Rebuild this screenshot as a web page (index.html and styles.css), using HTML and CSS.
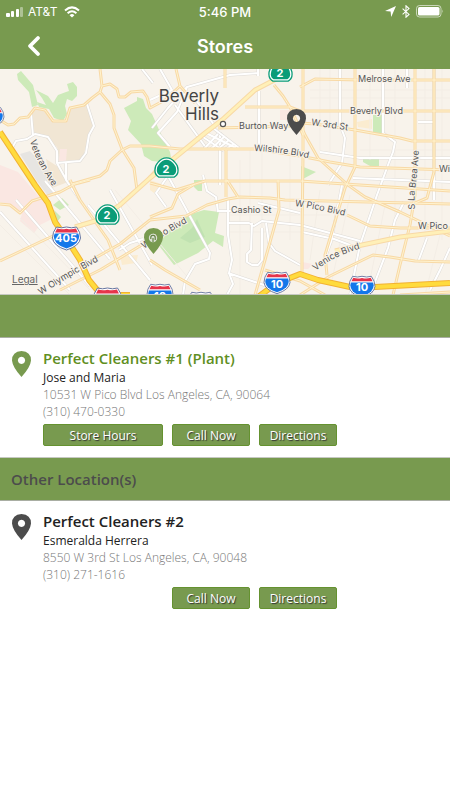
FILE: index.html
```html
<!DOCTYPE html>
<html lang="en">

<head>
    <meta charset="UTF-8">
    <meta name="viewport" content="width=device-width, initial-scale=1.0">
    <title>Stores</title>
    <link rel="stylesheet" href="styles.css">
</head>

<body>
    <header>
        <div class="status-bar">
            <div class="carrier">
                <svg width="18" height="10" viewBox="0 0 18 10" fill="#fff">
                    <rect x="0" y="6" width="4" height="4" rx="1" />
                    <rect x="5" y="4" width="3" height="6" rx="1" />
                    <rect x="10" y="2" width="3" height="8" rx="1" />
                    <rect x="14" y="0" width="3" height="10" rx="1" opacity="0.4" />
                </svg>
                <span>AT&amp;T</span>
                <svg width="16" height="12" viewBox="0 0 16 12" fill="none" stroke="#fff" stroke-width="2">
                    <path d="M1 4.5Q8 -1.8 15 4.5" />
                    <path d="M3.6 7.2Q8 3.2 12.4 7.2" />
                    <path d="M5.6 9.2Q8 7 10.4 9.2L8 11.6z" fill="#fff" stroke="none" />
                </svg>
            </div>
            <span class="clock">5:46 PM</span>
            <div class="indicators">
                <svg width="11" height="11" viewBox="0 0 11 11" fill="#fff">
                    <path d="M11 0L6.2 11L5.6 5.6L0 5z" />
                </svg>
                <svg width="8" height="13" viewBox="0 0 8 13" fill="none" stroke="#fff" stroke-width="1.1">
                    <path d="M.6 3.6L7 9.4L4 12.2V.8L7 3.6L.6 9.4" />
                </svg>
                <svg width="28" height="13" viewBox="0 0 28 13">
                    <rect x=".5" y=".5" width="24.5" height="11.5" rx="3" fill="none" stroke="#fff" opacity="0.6" />
                    <rect x="2" y="2" width="21.5" height="8.5" rx="1.6" fill="#fff" />
                    <path d="M26.4 4.4q1.4 1.8 0 3.6z" fill="#fff" opacity="0.6" />
                </svg>
            </div>
        </div>
        <div class="title-bar">
            <button class="back-btn" aria-label="Back">
                <svg width="14" height="22" viewBox="0 0 14 22" fill="none" stroke="#fff" stroke-width="3.8" stroke-linecap="round" stroke-linejoin="round">
                    <path d="M11 3L3 11L11 19" />
                </svg>
            </button>
            <h1>Stores</h1>
        </div>
    </header>

    <main>
        <svg class="map" viewBox="0 69 450 225" preserveAspectRatio="xMidYMid slice" role="img" aria-label="Map of store locations">
            <defs>
                <symbol id="state-route" viewBox="0 0 26 22" overflow="visible">
                    <path d="M5 21Q1 19 1 14Q1 9 4 6Q8 1 13 1Q18 1 22 6Q25 9 25 14Q25 19 21 21Z" fill="#0a9c78" stroke="#0a9c78" stroke-width="1.6" />
                    <path d="M5.5 19.8Q2.2 18 2.2 14Q2.2 9.5 5 6.6Q8.6 2.2 13 2.2Q17.4 2.2 21 6.6Q23.8 9.5 23.8 14Q23.8 18 20.5 19.8Z" fill="none" stroke="#fff" stroke-width="1.3" />
                </symbol>
                <symbol id="interstate" viewBox="0 0 28 24" overflow="visible">
                    <path d="M4 1Q9 2.6 14 1Q19 2.6 24 1Q28 6 28 12Q27 20 14 24Q1 20 0 12Q0 6 4 1Z" fill="#fff" stroke="#6675a0" stroke-width="1" />
                    <path d="M4.6 2.6Q9 4 14 2.8Q19 4 23.4 2.6L25.4 6.4H2.6Z" fill="#e6354b" />
                    <path d="M2.2 7.6H25.8Q28 12 24 17Q20 21 14 22.4Q8 21 4 17Q0 12 2.2 7.6Z" fill="#1477ea" />
                </symbol>
                <symbol id="pin" viewBox="0 0 19 26">
                    <path d="M9.5 0Q19 .5 19 9.5Q18.5 16 9.5 26Q.5 16 0 9.5Q0 .5 9.5 0ZM9.5 5.8a3.600 3.600 0 1 0 .01 0Z" fill="currentColor" fill-rule="evenodd" />
                </symbol>

                <g id="streets">
                    <path d="M31 113L33 136M12 148L16 141L27 139L35 134L48 137L57 151L57 163L68 183M87 104L94 126L89 135L86 153L80 161L57 163M66 163V180L80 200" />
                    <path d="M0 212L70 290M16 200L90 286M45 181L110 259M88 205L150 280M110 190L152 265M119 250L130 243L143 239M150 100L172 90L160 69M142 69L153 83" />
                    <path d="M187 87L168 108L152 128M170 147L158 133L177 112L187 87L230 75L258 73M190 92L215 126M175 105L207 149M220 132V185M258 69V76M259 91V150" />
                    <path d="M168 176L210 253L209 259L195 264L185 281L183 295M168 176L156 193L166 207M203 175L207 191L216 197L218 212M228 200V235L232 260L229 273L233 284L227 295M218 211H258M228 223H249L254 226L262 221L280 223L300 225L360 241M252 223L251 250L247 254V262L252 265H258L262 260V228M266 223L269 243L275 251L300 265M228 273L270 287" />
                    <path d="M340 69V125L345 138L342 163L328 185M383 69V133L395 142L393 152L388 165L377 195L360 245L350 295M407 69V88M434 69V200M320 152L360 158H450M353 178L450 182M418 122H434M302 232L334 239L350 245M343 180L331 242L325 258M404 202L395 220L388 248L370 295M427 238L421 254L418 262M450 248L440 270L430 290M258 203L300 213" />
                </g>
                <path id="small-streets" d="M204 132L236 148M213 128L239 148M200 135L224 151M204 149L218 134M211 149L225 136M218 149L229 140M226 149L234 144" />
                <g id="roads">
                    <path d="M0 120L8 125L14 124L20 118L28 117L35 108L45 110L53 121L66 121L70 108L84 105L92 98L100 92L102 86L110 84L117 89L119 97L125 97L131 92L143 91L147 97L150 108L165 100L180 86L176 69M100 69L102 86M100 92L110 104L114 115L114 128L122 149L134 168L137 190M195 103L180 86" />
                    <path d="M150 146L130 146L122 150L110 161L107 170L100 176L72 184M150 146L180 149H255L300 156L330 162L360 167L450 170M0 204L10 205L20 213L32 201L60 192L75 184L90 180M70 180L80 200L108 240L120 270M0 261L40 242L66 230" />
                    <path d="M60 290L100 270L150 240M95 258L120 244L150 220L186 216L207 205L228 199L240 197L270 198L285 200L450 204M130 195L147 180L165 160M150 183L176 190L205 181H300L450 191M150 260L165 270L200 290M150 217L172 208L178 194L195 184" />
                    <path d="M225 69V88M226 150V197M227 180L238 197M278 180L279 210L265 260L255 295M218 128L290 126L300 123L315 124L355 130L400 138L412 141H450M245 107H290L300 111H450M274 85L283 96L290 107L303 135M300 87L315 79L360 80H450" />
                    <path d="M303 69V155L302 240V275M355 69V167L345 188L325 255L327 275M415 69V195L410 225L400 265L393 295M434 69V172L427 198L415 203M300 123L305 135L318 158L348 185L365 197L400 212L450 236" />
                    <path d="M347 215L370 226L400 228H450M300 295L330 276L373 255L390 257L415 261L450 262M265 270L300 281L325 295M400 295L450 292" />
                </g>
                <path id="avenues" d="M75 227L95 221L120 205L150 178L205 133L222 120L255 90L280 77M335 251L362 245L400 237L450 231" />
                <path id="freeways" d="M0 132L35 185L48 203L55 222L66 238L80 260L89 280L98 291M98 295H130M258 297L277 283L300 274L318 280L350 287H375L450 283" />

                <!-- baselines for the street names -->
                <path id="veteran-line" d="M30 141Q35 160 53 187" />
                <path id="olympic-line" d="M41 295Q64 279 104 258" />
                <path id="pico-west-line" d="M144 249Q165 234 190 221" />
                <path id="wilshire-line" d="M254 151Q285 152 316 160" />
                <path id="third-line" d="M311 125L352 131" />
                <path id="pico-line" d="M295 206Q312 208 350 217" />
                <path id="venice-line" d="M316 271Q332 256 366 247" />
                <path id="brea-line" d="M415 209Q414 200 415 190Q418 172 419 145" />
            </defs>

            <rect y="69" width="450" height="226" fill="#f8f3eb" />

            <!-- parks and campus areas -->
            <g fill="#cdeab9">
                <path d="M17 74L21 71L33 85L36 97L38 105L32 107L29 92L18 80Z" />
                <path d="M36 90L48 96L53 103L58 95L66 92L69 91L67 84L73 82L77 87V96L72 101L67 99L65 106L67 114L63 121L54 118L49 109L39 107L37 102L46 105L42 98Z" />
                <path d="M124 108L137 101V97L143 99L146 108L152 114L160 132L170 152L172 163L152 161L144 156L141 144L128 130L131 121Z" />
                <path d="M160 247L163 236L184 216L204 210L219 212L215 233L224 236L223 247L213 241L198 253L174 265Z" />
                <path d="M53 205L62 198L69 205L60 210Z" />
                <path d="M54 210L61 217L57 222Z" />
                <path d="M194 180H202V191H198L194 187Z" />
                <path d="M373 115H382V133H373Z" />
                <path d="M363 159H379V166H370L363 162Z" />
                <path d="M301 166L316 172L301 180Z" />
            </g>
            <path d="M180 238L192 228L197 219L205 237L190 243Z" fill="#c0e2b1" />
            <path d="M32 113L37 108L46 111L53 121L66 121L70 107L86 104L93 120L93 130L87 143L82 160L60 161L57 147L40 134L33 135Z" fill="#f1e6d4" />
            <path d="M20 154L30 151L50 172L53 194L48 196L36 180Z" fill="#e7e5e2" />
            <path d="M46 159L60 168L68 182L52 188Z" fill="#f2e6d3" />
            <g fill="#fae7e2">
                <path d="M0 165L18 172L45 204L54 218L40 225L34 233L20 221L22 213L10 204L0 202Z" />
                <path d="M60 149H67L66 161H59Z" />
                <path d="M280 110H290V120H280ZM302 262L313 264L308 269H302Z" />
            </g>
            <path d="M357 122L372 119V129L358 127ZM150 180L161 184L154 193L150 190ZM120 256L138 255L136 263L122 265Z" fill="#fbecd0" />

            <!-- each line is drawn twice: edge, then fill -->
            <g fill="none" stroke-linejoin="round">
                <path class="street-grid" d="M240 160V295M250 150V230M262 150V260M290 150V240M320 69V150M330 69V155M370 69V160M395 69V220M425 69V240M442 69V240M310 90H450M310 98H450M360 150H450M0 225L70 295M20 218L90 290M115 190L190 280M230 215H330M230 232H320M320 190L310 260M350 195L330 290M385 205L370 280M440 235L425 295" />
                <use href="#streets" class="street-edge" />
                <use href="#streets" class="street" />
                <use href="#small-streets" class="street-edge" />
                <use href="#small-streets" class="street" />
                <use href="#roads" class="road-edge" />
                <use href="#roads" class="road" />
                <use href="#avenues" class="avenue-edge" />
                <use href="#avenues" class="avenue" />
                <use href="#freeways" class="freeway-edge" />
                <use href="#freeways" class="freeway" />
            </g>

            <!-- labels -->
            <g class="street-labels">
                <text x="358" y="82">Melrose Ave</text>
                <text x="350" y="114">Beverly Blvd</text>
                <text x="239" y="129">Burton Way</text>
                <text x="231" y="213">Cashio St</text>
                <text x="439" y="172">Wilshire</text>
                <text x="418" y="229">W Pico</text>
                <text><textPath href="#veteran-line">Veteran Ave</textPath></text>
                <text><textPath href="#olympic-line">W Olympic Blvd</textPath></text>
                <text><textPath href="#pico-west-line">W Pico Blvd</textPath></text>
                <text><textPath href="#wilshire-line">Wilshire Blvd</textPath></text>
                <text><textPath href="#third-line">W 3rd St</textPath></text>
                <text><textPath href="#pico-line">W Pico Blvd</textPath></text>
                <text><textPath href="#venice-line">Venice Blvd</textPath></text>
                <text><textPath href="#brea-line">S La Brea Ave</textPath></text>
            </g>
            <g class="city-label">
                <text x="219" y="102">Beverly</text>
                <text x="219" y="120">Hills</text>
            </g>
            <circle cx="223" cy="124" r="2.6" fill="#fff" stroke="#555" stroke-width="1.2" />
            <a href="#legal"><text class="legal" x="12" y="283">Legal</text></a>

            <!-- route shields -->
            <use href="#state-route" x="268" y="61" width="25" height="21" />
            <use href="#state-route" x="154" y="157" width="25" height="21" />
            <use href="#state-route" x="95" y="204" width="25" height="21" />
            <use href="#interstate" x="52" y="226" width="29" height="24" />
            <use href="#interstate" x="-20" y="106" width="24" height="22" />
            <use href="#interstate" x="264" y="271" width="26" height="23" />
            <use href="#interstate" x="349" y="275" width="26" height="23" />
            <use href="#interstate" x="93" y="287" width="29" height="24" />
            <use href="#interstate" x="147" y="283" width="26" height="23" />
            <use href="#interstate" x="188" y="291" width="26" height="23" />
            <g class="shield-text">
                <text x="280" y="77">2</text>
                <text x="166" y="173">2</text>
                <text x="107" y="219">2</text>
                <text x="66" y="242">405</text>
                <text x="277" y="288">10</text>
                <text x="362" y="291">10</text>
                <text x="160" y="300">10</text>
            </g>

            <use class="pin-dark" href="#pin" x="287" y="109" width="19" height="26" />
            <use class="pin-green" href="#pin" x="144" y="228" width="19" height="26" />
            <circle cx="153" cy="238" r="4.2" fill="#d9dfd1" />
            <path d="M150.8 239v-1.6a2.2 2.2 0 0 1 4.4 0v2.6M153 238v4" fill="none" stroke="#5c7d3a" stroke-width="1.1" />
        </svg>

        <section>
            <h2 class="section-title"></h2>
            <article class="store">
                <svg class="store-pin pin-green" viewBox="0 0 19 26"><use href="#pin" /></svg>
                <div class="store-info">
                    <h3 class="current">Perfect Cleaners #1 (Plant)</h3>
                    <p class="manager">Jose and Maria</p>
                    <p>10531 W Pico Blvd Los Angeles, CA, 90064</p>
                    <p>(310) 470-0330</p>
                    <div class="actions">
                        <button class="hours">Store Hours</button>
                        <button class="call">Call Now</button>
                        <button class="directions">Directions</button>
                    </div>
                </div>
            </article>
        </section>

        <section>
            <h2 class="section-title">Other Location(s)</h2>
            <article class="store">
                <svg class="store-pin pin-dark" viewBox="0 0 19 26"><use href="#pin" /></svg>
                <div class="store-info">
                    <h3>Perfect Cleaners #2</h3>
                    <p class="manager">Esmeralda Herrera</p>
                    <p>8550 W 3rd St Los Angeles, CA, 90048</p>
                    <p>(310) 271-1616</p>
                    <div class="actions">
                        <button class="call">Call Now</button>
                        <button class="directions">Directions</button>
                    </div>
                </div>
            </article>
        </section>
    </main>
</body>

</html>
```
FILE: styles.css
```css
* {
    box-sizing: border-box;
}

body {
    font-family: 'Open Sans', 'Noto Sans', sans-serif;
    margin: 0;
    background-color: #fff;
    color: #222;
}

h1,
h2,
h3,
p {
    margin: 0;
}

button {
    border: none;
    padding: 0;
    font-family: inherit;
    cursor: pointer;
}

header {
    background-color: #789a4f;
    color: white;
    font-family: Inter, Roboto, sans-serif;
}

.status-bar {
    display: grid;
    grid-template-columns: 1fr auto 1fr;
    align-items: center;
    height: 23px;
    padding: 0 6px;
    font-size: 12px;
}

.carrier,
.indicators {
    display: flex;
    align-items: center;
    gap: 4px;
}

.carrier span {
    margin-right: 3px;
}

.indicators {
    justify-content: flex-end;
    gap: 6px;
}

.clock {
    font-size: 13px;
    font-weight: 500;
}

.title-bar {
    display: grid;
    grid-template-columns: 60px 1fr 60px;
    align-items: center;
    height: 46px;
}

.title-bar h1 {
    font-size: 18px;
    font-weight: 600;
    text-align: center;
}

.back-btn {
    display: flex;
    align-items: center;
    justify-content: flex-end;
    height: 44px;
    padding-right: 19px;
    background: none;
}

/* Map */
.map {
    display: block;
    width: 100%;
    height: 225px;
}

.street-grid {
    stroke: #f3ede5;
    stroke-width: 1px;
}

.street-edge {
    stroke: #dedbd7;
    stroke-width: 3px;
}

.street {
    stroke: #fff;
    stroke-width: 2px;
}

.road-edge {
    stroke: #f8d9a6;
    stroke-width: 3px;
}

.road {
    stroke: #fff3cf;
    stroke-width: 1px;
}

.avenue-edge {
    stroke: #f8d9a6;
    stroke-width: 5px;
}

.avenue {
    stroke: #fff0b8;
    stroke-width: 3px;
}

.freeway-edge {
    stroke: #f2b233;
    stroke-width: 6px;
}

.freeway {
    stroke: #ffdb3d;
    stroke-width: 4px;
}

.street-labels {
    font-family: Inter, sans-serif;
    font-size: 9px;
    fill: #555;
    stroke: #f8f3eb;
    stroke-width: 2px;
    paint-order: stroke;
}

.city-label {
    font-family: Inter, sans-serif;
    font-size: 17px;
    text-anchor: end;
    fill: #444;
    stroke: #f8f3eb;
    stroke-width: 2px;
    paint-order: stroke;
}

.legal {
    font-family: Inter, sans-serif;
    font-size: 10px;
    fill: #666;
    text-decoration: underline;
}

.shield-text {
    font-family: Inter, sans-serif;
    font-size: 11px;
    font-weight: 700;
    text-anchor: middle;
    fill: #fff;
}

.pin-green {
    color: #789a4f;
}

.pin-dark {
    color: #4c4c4c;
}

/* Store list */
.section-title {
    display: flex;
    align-items: center;
    height: 44px;
    padding: 0 11px;
    border-top: 1px solid #c6c9c2;
    border-bottom: 1px solid #a9aea3;
    background-color: #789a4f;
    color: #4c4c4c;
    font-size: 15px;
    font-weight: 600;
}

.store {
    display: flex;
    gap: 12px;
    padding: 9px 12px 11px;
}

.store-pin {
    flex: none;
    width: 19px;
    height: 26px;
    margin-top: 4px;
}

.store-info {
    flex: 1;
    color: #777;
    font-size: 12px;
    font-weight: 300;
    line-height: 17px;
}

.store-info h3 {
    color: #222;
    font-size: 15px;
    font-weight: 600;
    line-height: 22px;
}

.store-info .current {
    color: #5f8f22;
}

.store-info .manager {
    color: #222;
    font-weight: 400;
}

.actions {
    display: grid;
    grid-template-columns: 120px 78px 78px;
    gap: 9px;
    margin-top: 4px;
}

.actions button {
    height: 22px;
    border: 1px solid #659230;
    border-radius: 2px;
    background-color: #789a4f;
    color: white;
    font-size: 12px;
    text-shadow: 1px 1px 1px #333;
}

.hours {
    grid-column: 1;
}

.call {
    grid-column: 2;
}

.directions {
    grid-column: 3;
}
```
